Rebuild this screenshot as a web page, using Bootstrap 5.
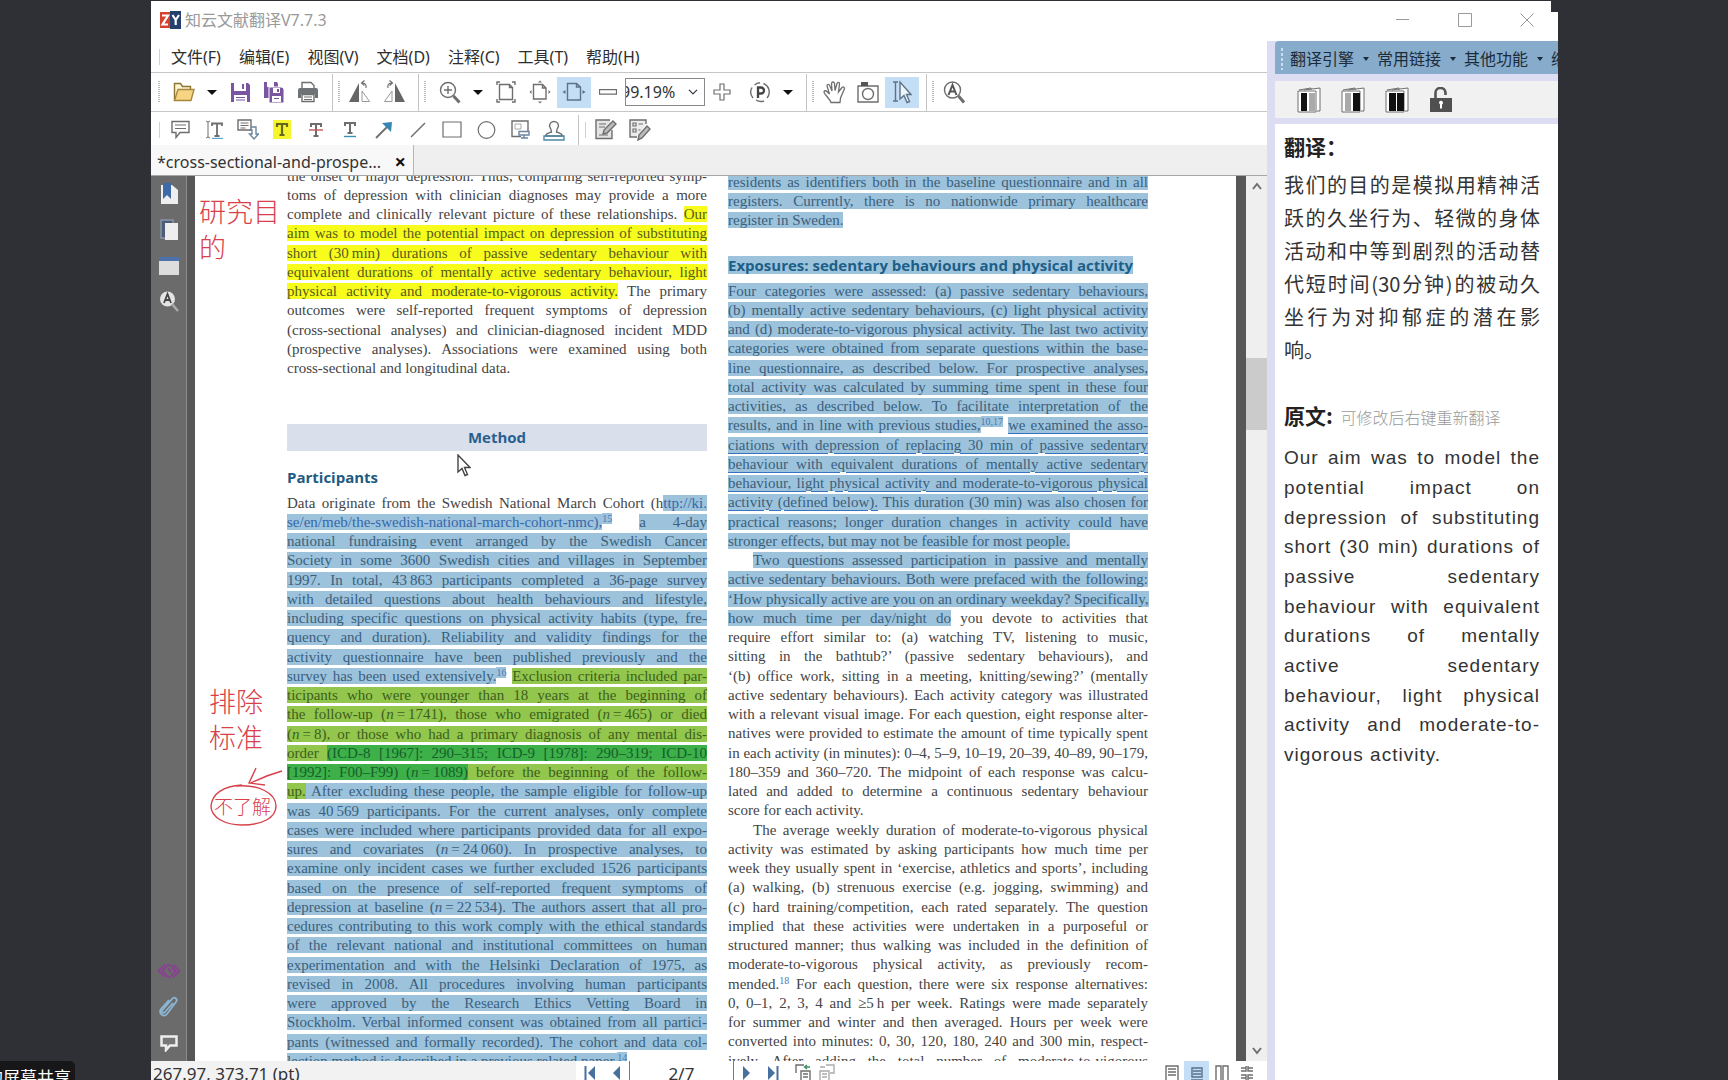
<!DOCTYPE html>
<html lang="zh-CN">
<head>
<meta charset="utf-8">
<meta name="viewport" content="width=device-width, initial-scale=1">
<title>知云文献翻译</title>
<link href="https://cdn.jsdelivr.net/npm/bootstrap@5.3.0/dist/css/bootstrap.min.css" rel="stylesheet">
<style>
body{background:#2f3035;font-family:"Noto Sans","Noto Sans CJK SC",sans-serif;font-size:16px;color:#333;line-height:20px}
.app-win{margin:1px 170px 0 151px;background:#fff}
.title-bar{height:40px;padding:0 0 2px 9px;color:#9a9a9a}
.notch{top:-1px;right:0;width:7px;height:12px;background:#2f3035}
.menu-row{height:32px;border-bottom:1px solid #c6c6c6;padding:1px 0 0 4px;color:#2e2e2e}
.menu-row a{margin-right:18px;color:inherit}
.menu-row .grip{margin-right:8px}
.tool-row{height:39px;border-bottom:1px solid #c6c6c6;padding:1px 0 0 4px}
.tool-row.second{height:33px;border-bottom:0;padding-top:3px}
.grip{width:8px;height:22px;background:repeating-linear-gradient(#b8b8b8 0 1px,#fff 1px 2px) center/2px 100% no-repeat}
.grip.solid{height:16px;background:linear-gradient(#cfcfdc,#cfcfdc) center/1px 100% no-repeat}
.vsep{width:1px;margin:0 2px 0 7px;background:#c4c4c4}
.tb{width:34px;height:31px;padding:0;border:0;background:transparent;display:flex;align-items:center;justify-content:center}
.tb.win-ctl{width:62px;height:38px}
.tb.on{background:#c3def5}
.caret{width:22px;height:31px;padding:0;border:0;background:transparent}
.caret::after{content:"";display:block;margin:auto;width:9px;border:5px solid transparent;border-top-color:#111;border-bottom:0}
svg{display:block;fill:none;stroke:#6e6e6e;stroke-width:1.4}
.zoom-sel{width:80px;height:28px;border:1px solid #8a8a8a;border-radius:0;padding:0 20px 0 0;font:16px "Noto Sans",sans-serif;color:#333;background-position:right 5px center;background-size:12px 10px;text-indent:-5px}
.tab-row{height:31px;background:#efefef;border-bottom:1px solid #a6a6a6}
.doc-tab{width:263px;padding:4px 7px 0 6px;background:#f8f8f8;border-right:1px solid #b5b5b5;white-space:nowrap}
.doc-tab button{border:0;background:none;padding:0;font:bold 20px/20px "Noto Sans",sans-serif;color:#111}
.side{width:36px;background:#6b6b6b;border-right:1px solid #8c8c8c}
.side button{width:36px;height:36px;padding:0;border:0;background:none;display:flex;align-items:center;justify-content:center}
.side-edge{width:8px;background:#565656}
.page{background:#fff;padding:0 88px 0 92px;gap:21px;font:15px/19px "Liberation Serif",serif;color:#444}
.col-text{flex:1 1 0;min-width:0}
.col-a{margin-top:-9px}
.col-b{margin-top:-3px}
.ln{height:19px;text-align:justify;text-align-last:justify;white-space:nowrap}
.ln:nth-child(4n){height:20px}
.ln.fin{text-align-last:left}
.ln.ind{padding-left:25px}
.ln sup{font-size:10px;color:#4b78b5}
.sb{background:#9dc3dc;color:#3a5f7c}
.sb.lk{color:#3567ab}
.sb.un{text-decoration:underline;text-decoration-color:#3573c0;text-underline-offset:3px}
.sy{background:#f8fc1c;color:#565c1a}
.sg{background:#92c64c;color:#3d5f1d}
.sd{background:#3db04a;color:#155f2a}
.band{height:27px;margin:46px 0 16px;background:#d9dfeb;text-align:center;font:bold 15px/27px "Open Sans",sans-serif;color:#2a5f90}
.subhead{font:bold 15px/20px "Open Sans",sans-serif;color:#1f5a82;margin:0 0 7px}
.subhead.sel{line-height:18px;margin:26px 0 8px;white-space:nowrap}
.subhead.sel span{background:#9dc3dc;color:#1b5f88;display:inline-block}
.page-end{width:10px;background:#575757}
.scroll{width:21px;background:#efefef}
.scroll .thumb{height:72px;background:#cbcbcb}
.ink{position:absolute;color:#d8404a;font:300 27px/36px "Noto Sans CJK SC",sans-serif;white-space:nowrap}
.ink.sm{font-size:19px;line-height:24px}
svg.ink{stroke:#d8404a}
.pointer{position:absolute;left:262px;top:278px}
.status{height:19px;background:#fff;overflow:hidden}
.status .coords{width:425px;background:#f2f2f2;padding-left:2px;font-size:17px;line-height:26px}
.status button{border:0;background:none;padding:0;height:24px}
.pg-box{width:105px;border:solid #5b7ba8;border-width:0 1px;font-size:17px;line-height:26px;text-align:center;height:19px}
.view-btn{width:25px;display:flex;justify-content:center;align-items:center}
.view-btn.on{background:#c3def5!important}
.trans{width:291px;background:#dcdcf3;padding-left:8px;margin-top:40px}
.t-menu{height:33px;background:#86abcb;border-radius:4px 0 0 0;color:#1c2b3a;padding:3px 0 0 3px}
.t-menu .grip{background:repeating-linear-gradient(#c8def0 0 3px,transparent 3px 5px) center/2px 100% no-repeat;margin-right:4px}
.t-menu a{color:inherit;width:87px;flex:none;display:flex;align-items:center}
.t-menu a::after{content:"";margin-left:9px;border:3px solid transparent;border-top:4px solid #1c2b3a;border-bottom:0}
.t-tools{height:37px;margin:7px 0 6px;background:#f1f1f1;padding-left:12px}
.t-tools button{width:44px;height:30px;border:0;background:none;padding:0;display:flex;align-items:center;justify-content:center}
.t-body{background:#fff;padding:9px 18px 0 9px;color:#333}
.t-head{font-size:21px;line-height:26px;font-weight:700;color:#222;margin:0;font-family:"Noto Sans CJK SC",sans-serif}
.t-head small{font-size:16px;font-weight:300;color:#999;margin-left:3px}
.zh{font:20px/33px "Noto Sans CJK SC",sans-serif;margin:9px 0 36px;color:#333}
.en{font:19px/30px "Liberation Sans",sans-serif;letter-spacing:1px;margin-top:13px}
.jl{text-align:justify;text-align-last:justify;white-space:nowrap}
.jl.fin{text-align-last:left}
.en .jl:nth-child(3n){line-height:29px}
.share{left:0;bottom:0;height:19px;width:75px;background:#17171a;border-radius:0 5px 0 0;color:#fff;font:17px/31px "Noto Sans CJK SC",sans-serif;display:flex;justify-content:flex-end;padding-right:4px;white-space:nowrap}
</style>
<script src="https://cdn.jsdelivr.net/npm/bootstrap@5.3.0/dist/js/bootstrap.bundle.min.js"></script>
</head>
<body class="vh-100 overflow-hidden d-flex flex-column">
<div class="app-win flex-grow-1 position-relative d-flex overflow-hidden">
  <div class="d-flex flex-column flex-grow-1 overflow-hidden">
    <header class="title-bar d-flex align-items-center">
      <svg class="me-1" width="21" height="18" viewBox="0 0 21 18"><path d="M0 1h10v16H0z" fill="#d5432f" stroke="none"/><path d="M10 0h11v18H10z" fill="#23406f" stroke="none"/><path d="M2 4.500h6L2.500 13.500H8M12.500 4l3.200 5v5M19 4l-3.300 5" stroke="#fff" stroke-width="2.200"/></svg>
      <span>知云文献翻译V7.7.3</span>
    </header>
    <nav class="menu-row d-flex flex-shrink-0 align-items-center" aria-label="菜单">
      <span class="grip solid"></span>
      <a href="#" class="text-decoration-none">文件(F)</a><a href="#" class="text-decoration-none">编辑(E)</a><a href="#" class="text-decoration-none">视图(V)</a><a href="#" class="text-decoration-none">文档(D)</a><a href="#" class="text-decoration-none">注释(C)</a><a href="#" class="text-decoration-none">工具(T)</a><a href="#" class="text-decoration-none">帮助(H)</a>
    </nav>
    <div class="tool-row d-flex flex-shrink-0 align-items-center">
      <span class="grip me-1"></span>
      <button class="tb" aria-label="打开"><svg width="22" height="22" viewBox="0 0 22 22"><path d="M1.500 19.500V2.500h6l2 3h8v3" fill="#fff3d0" style="stroke:#8b7433"/><path d="M1.500 19.500 5 8.500h16l-3 11z" fill="#f7d482" style="stroke:#a5883c"/></svg></button>
      <button class="caret" aria-label="最近"></button>
      <button class="tb" aria-label="保存"><svg width="21" height="21" viewBox="0 0 21 21"><path d="M1 1h17l2 2v17H1z" fill="#7b55a0" stroke="none"/><path d="M4 1h12v8H4zM4 13h13v7H4z" fill="#fff" stroke="none"/><path d="M12 2h2v5h-2zM6 15h9v1H6zM6 17.500h9v1H6z" fill="#7b55a0" stroke="none"/></svg></button>
      <button class="tb" aria-label="全部保存"><svg width="22" height="23" viewBox="0 0 22 23"><path d="M1 1h13l1 2v14H1z" fill="#7b55a0" stroke="none"/><path d="M4 1h7v5H4z" fill="#fff" stroke="none"/><path d="M6 6h13l2 2v14H6z" fill="#7b55a0" stroke="#fff" stroke-width="1"/><path d="M10 7h7v5h-7zM9 15h9v6H9z" fill="#fff" stroke="none"/><path d="M14 8h2v3h-2zM11 17h5v1h-5z" fill="#7b55a0" stroke="none"/></svg></button>
      <button class="tb" aria-label="打印"><svg width="22" height="22" viewBox="0 0 22 22"><path d="M5 7V1.500h9l3 3V7" fill="#fff"/><path d="M1 9q0-2 2-2h16q2 0 2 2v8h-3v-4H4v4H1z" fill="#6f7377" stroke="none"/><path d="M5 13.500h12v7H5z" fill="#fff"/><path d="M7 16h8M7 18.500h8" stroke-width="1"/></svg></button>
      <span class="vsep align-self-stretch"></span><span class="grip"></span>
      <button class="tb" aria-label="左旋"><svg width="22" height="24" viewBox="0 0 22 24"><path d="M10 3v19H0z" fill="#666" stroke="none"/><path d="M13 11v10.500h7.500z" stroke="#999" stroke-width="1"/><path d="M17 8q1-5-4-5M15.500.500 12.500 3l3 2.500" stroke-width="1.200"/></svg></button>
      <button class="tb" aria-label="右旋"><svg width="22" height="24" viewBox="0 0 22 24"><path d="M12 3v19h10z" fill="#666" stroke="none"/><path d="M9 11v10.500H1.500z" stroke="#999" stroke-width="1"/><path d="M5 8Q4 3 9 3M6.500.500l3 2.500-3 2.500" stroke-width="1.200"/></svg></button>
      <span class="vsep align-self-stretch"></span><span class="grip me-1"></span>
      <button class="tb" aria-label="放大镜"><svg width="22" height="23" viewBox="0 0 22 23"><circle cx="9" cy="9" r="7.500"/><path d="M9 5v8M5 9h8"/><path d="m14.500 15 6 6.500" stroke-width="3"/></svg></button>
      <button class="caret" aria-label="缩放菜单"></button>
      <button class="tb" aria-label="适合页面"><svg width="20" height="22" viewBox="0 0 20 22"><path d="M3.500 3.500h10l3 3v12h-13zM13.500 3.500v3h3"/><path d="M1 4V1h3M16 1h3v3M19 18v3h-3M4 21H1v-3"/></svg></button>
      <button class="tb" aria-label="实际大小"><svg width="22" height="24" viewBox="0 0 22 24"><path d="M4.500 4.500h9l3.500 3.500v11H4.500zM13.500 4.500V8H17"/><path d="m9 2.500 2-2 2 2zM9 21.500l2 2 2-2zM2.500 10l-2 2 2 2zM19.500 10l2 2-2 2z" fill="#6e6e6e" stroke="none"/></svg></button>
      <button class="tb on" aria-label="适合宽度"><svg width="24" height="20" viewBox="0 0 24 20"><path d="M5.500 1.500h9L18.500 5v13h-13zM14.500 1.500V5h4" style="stroke:#5f7387"/><path d="m3.500 8-3 2 3 2zM20.500 8l3 2-3 2z" fill="#5f7387" stroke="none"/></svg></button>
      <button class="tb" aria-label="缩小"><svg width="18" height="6" viewBox="0 0 18 6"><path d="M.500.700h17v4.500H.500z" stroke-width="1.200"/></svg></button>
      <select class="form-select zoom-sel" aria-label="缩放比例"><option>99.19%</option></select>
      <button class="tb" aria-label="放大"><svg width="18" height="18" viewBox="0 0 18 18"><path d="M7 1h4v6h6v4h-6v6H7v-6H1V7h6z" stroke-width="1.200"/></svg></button>
      <button class="tb ms-1" aria-label="旋转视图"><svg width="22" height="22" viewBox="0 0 22 22"><path d="M14.500 2.500A9.200 9.200 0 0 1 18 17M15 20a9 9 0 0 1-8-1M4 17A9.200 9.200 0 0 1 3 6.500M5.500 4A9 9 0 0 1 11 1.700"/><path d="M9 17V6.500h3a2.700 2.700 0 0 1 0 6H9" stroke-width="2.300" style="stroke:#444"/></svg></button>
      <button class="caret" aria-label="旋转菜单"></button>
      <span class="vsep align-self-stretch"></span><span class="grip"></span>
      <button class="tb" aria-label="手形"><svg width="23" height="24" viewBox="0 0 23 24"><path d="M8 22.500C7 19 1 14 1 12c0-1.500 2-1.800 3.500 0L6.500 14 4 6c0-2 2-2.300 2.700-.500L9 11 8.500 3.500c.300-2 2.500-2 3 0L12 10.500l2-7c.700-1.800 2.700-1.400 2.500.500L15.500 12 19 7.500c1.500-1.300 3 0 2.300 1.700L17.500 18l-.5 4.500z" fill="#fff" stroke-width="1.300"/></svg></button>
      <button class="tb" aria-label="快照"><svg width="22" height="21" viewBox="0 0 22 21"><path d="M1 4h20v16H1z"/><path d="M4 0h7v4H4z" fill="#555" stroke="none"/><circle cx="11" cy="12" r="5.500"/></svg></button>
      <button class="tb on" aria-label="选择文本"><svg width="20" height="24" viewBox="0 0 20 24" style="stroke:#5f7387"><path d="M1 2h5M3.500 2v19M1 21h5"/><path d="M8 2v17l4-3.500 3 7 2.500-1-3-7H19z" fill="#eef6fd"/></svg></button>
      <span class="vsep align-self-stretch"></span><span class="grip"></span>
      <button class="tb" aria-label="查找"><svg width="22" height="23" viewBox="0 0 22 23"><circle cx="9.500" cy="9" r="8"/><path d="m15.500 15 5.500 6.500" stroke-width="3"/><path d="m5.500 14 4-10 4 10M7 10.500h5" stroke-width="2" style="stroke:#555"/></svg></button>
    </div>
    <div class="tool-row second d-flex flex-shrink-0 align-items-center">
      <span class="grip solid"></span>
      <button class="tb" aria-label="附注"><svg width="19" height="19" viewBox="0 0 19 19"><path d="M1 1.500h17v11H9l-4 5v-5H1z"/><path d="M4 5h11M4 8.500h11" stroke-width="1.200"/></svg></button>
      <button class="tb" aria-label="插入文本"><svg width="19" height="19" viewBox="0 0 19 19"><path d="M1 1l2 1 2-1M3 2v15M1 18l2-1 2 1" stroke-width="1"/><path d="M7 6V3.500h10V6M12 3.500V16M9.500 16h5" stroke-width="1.800"/><path d="M7 18.500h11" style="stroke:#59a6c9"/></svg></button>
      <button class="tb" aria-label="替换文本"><svg width="22" height="22" viewBox="0 0 22 22"><path d="M1 1h13v10H1z"/><path d="M3.500 4h8M3.500 6.500h8M3.500 9h5" stroke-width="1"/><path d="M14 8h5v7h2.500L17 20l-4.500-5H15v-4h-3" style="stroke:#6c86a0"/></svg></button>
      <button class="tb" aria-label="高亮"><svg width="18" height="19" viewBox="0 0 18 19"><path d="M0 0h18v19H0z" fill="#f4f52c" stroke="none"/><path d="M4 7V4h10v3M9 4v11M6.500 15h5" stroke-width="2.200" style="stroke:#66661f"/></svg></button>
      <button class="tb" aria-label="删除线"><svg width="16" height="16" viewBox="0 0 16 16"><path d="M3 5V2h10v3M8 2v12M5.500 14h5" stroke-width="2"/><path d="M1 8h14" style="stroke:#c05a5a"/></svg></button>
      <button class="tb" aria-label="下划线"><svg width="14" height="17" viewBox="0 0 14 17"><path d="M2 5V2h10v3M7 2v10M4.500 12h5" stroke-width="2"/><path d="M1 15.500h12" style="stroke:#3d8fb8"/></svg></button>
      <button class="tb" aria-label="箭头"><svg width="18" height="18" viewBox="0 0 18 18"><path d="M1 17 12 6" stroke-width="1.800"/><path d="M7 2l10-1-1 10z" fill="#3586b5" stroke="none"/></svg></button>
      <button class="tb" aria-label="直线"><svg width="16" height="16" viewBox="0 0 16 16"><path d="M1 15 15 1" stroke-width="1.500"/></svg></button>
      <button class="tb" aria-label="矩形"><svg width="20" height="17" viewBox="0 0 20 17"><path d="M1 1h18v15H1z" stroke-width="1.200"/></svg></button>
      <button class="tb" aria-label="椭圆"><svg width="19" height="18" viewBox="0 0 19 18"><circle cx="9.500" cy="9" r="8.300" stroke-width="1.200"/></svg></button>
      <button class="tb" aria-label="文本框"><svg width="19" height="19" viewBox="0 0 19 19"><path d="M10 16.500H1V1h16v10"/><path d="M4 4h6v5H4z" stroke-width="1" style="stroke:#aaa"/><path d="M8 11.500h10V15H8zM13 15v3M10 18h7" style="stroke:#6c86a0"/></svg></button>
      <button class="tb" aria-label="图章"><svg width="22" height="22" viewBox="0 0 22 22"><path d="M8.500 13c0-2-1-4-2-6a4.500 4.500 0 1 1 9 0c-1 2-2 4-2 6 2 1 5.500 1 6 4H2.500c.5-3 4-3 6-4z"/><path d="M1 17h20v4H1z" style="stroke:#4d89a8"/></svg></button>
      <span class="vsep align-self-stretch"></span><span class="grip solid"></span>
      <button class="tb" aria-label="编辑内容"><svg width="22" height="21" viewBox="0 0 22 21"><path d="M17 11v8.500H1V1h14" fill="#e4e4e4"/><path d="M4 5h7M4 8h6M4 16h9" stroke-width="1.200"/><path d="m8 15 1-4 9-9 3 3-9 9z" fill="#bbb"/></svg></button>
      <button class="tb" aria-label="编辑表单"><svg width="22" height="22" viewBox="0 0 22 22"><path d="M8 18H1V1h16v4" fill="#ececec"/><path d="M4 4h3v3H4zM4 10h3v3H4zM9.500 5H14M9.500 11h2" stroke-width="1.200"/><path d="m9 21 1-5 8-9 3 3-8 9z" fill="#bbb"/></svg></button>
    </div>
    <div class="tab-row d-flex flex-shrink-0">
      <div class="doc-tab d-flex align-items-center justify-content-between"><span>*cross-sectional-and-prospe...</span><button aria-label="关闭标签">×</button></div>
    </div>
    <main class="d-flex flex-grow-1 overflow-hidden">
      <aside class="side d-flex flex-column">
        <button aria-label="书签"><svg width="18" height="22" viewBox="0 0 18 22"><path d="M1 2h11l6 5v14H1z" fill="#eee" stroke="none"/><path d="M3 0h8v16l-4-4-4 4z" fill="#3d6ba8" stroke="none"/></svg></button>
        <button aria-label="缩略图"><svg width="19" height="22" viewBox="0 0 19 22"><path d="M1 1h12v18H1z" fill="#4d5d78" stroke="#8a97ab"/><path d="M5 4h13v17H5z" fill="#eee" stroke="none"/></svg></button>
        <button aria-label="图层"><svg width="20" height="18" viewBox="0 0 20 18"><path d="M0 0h20v18H0z" fill="#ddd" stroke="none"/><path d="M0 0h20v4H0z" fill="#4d72ab" stroke="none"/></svg></button>
        <button aria-label="搜索"><svg width="20" height="21" viewBox="0 0 20 21"><circle cx="8.500" cy="8" r="7.500" fill="#e4e4e4" stroke="none"/><path d="m13 13 6 7" style="stroke:#aaa" stroke-width="2.500"/><path d="m5 12 3.500-9L12 12M6 9h5" style="stroke:#444" stroke-width="1.800"/></svg></button>
        <span class="flex-grow-1"></span>
        <button aria-label="链接"><svg width="24" height="18" viewBox="0 0 24 18"><path d="M8.500 12 5.500 9l5-5.500c1-1 2-1 3 0L19 9l-3 3M15.500 6l3 3-5 5.500c-1 1-2 1-3 0L5 9l3-3M8 15 1.500 9 8 2.500M16 2.500 22.500 9 16 15.500M11 6.500l3 3.500" style="stroke:#8d3d96" stroke-width="1.600"/></svg></button>
        <button aria-label="附件"><svg width="20" height="22" viewBox="0 0 20 22"><path d="m14 7-8 9c-2 2-4 0-2.500-2L13 3c2.500-3 6 0 4 3L8 18c-3 3.500-9 0-6-5l8-9" style="stroke:#8db4d0" stroke-width="1.800"/></svg></button>
        <button aria-label="注释"><svg width="18" height="17" viewBox="0 0 18 17"><path d="M1.500 1.500h15v9H10L6 15v-4.500H1.500z" fill="#777" style="stroke:#eee" stroke-width="2.500"/></svg></button>
      </aside>
      <div class="side-edge"></div>
      <article class="page position-relative d-flex flex-grow-1 overflow-hidden" lang="en">
        <div class="col-text col-a">
          <div>
            <div class="ln">the onset of major depression. Thus, comparing self-reported symp-</div>
            <div class="ln">toms of depression with clinician diagnoses may provide a more</div>
            <div class="ln">complete and clinically relevant picture of these relationships. <span class="sy">Our</span></div>
            <div class="ln"><span class="sy">aim was to model the potential impact on depression of substituting</span></div>
            <div class="ln"><span class="sy">short (30&#8201;min) durations of passive sedentary behaviour with</span></div>
            <div class="ln"><span class="sy">equivalent durations of mentally active sedentary behaviour, light</span></div>
            <div class="ln"><span class="sy">physical activity and moderate-to-vigorous activity.</span> The primary</div>
            <div class="ln">outcomes were self-reported frequent symptoms of depression</div>
            <div class="ln">(cross-sectional analyses) and clinician-diagnosed incident MDD</div>
            <div class="ln">(prospective analyses). Associations were examined using both</div>
            <div class="ln fin">cross-sectional and longitudinal data.</div>
          </div>
          <h2 class="band">Method</h2>
          <h3 class="subhead">Participants</h3>
          <div>
            <div class="ln">Data originate from the Swedish National March Cohort (h<span class="sb lk">ttp://ki.</span></div>
            <div class="ln"><span class="sb lk">se/en/meb/the-swedish-national-march-cohort-nmc),</span><sup class="sb">15</sup> <span class="sb">a 4-day</span></div>
            <div class="ln"><span class="sb">national fundraising event arranged by the Swedish Cancer</span></div>
            <div class="ln"><span class="sb">Society in some 3600 Swedish cities and villages in September</span></div>
            <div class="ln"><span class="sb">1997. In total, 43&#8201;863 participants completed a 36-page survey</span></div>
            <div class="ln"><span class="sb">with detailed questions about health behaviours and lifestyle,</span></div>
            <div class="ln"><span class="sb">including specific questions on physical activity habits (type, fre-</span></div>
            <div class="ln"><span class="sb">quency and duration). Reliability and validity findings for the</span></div>
            <div class="ln"><span class="sb">activity questionnaire have been published previously and the</span></div>
            <div class="ln"><span class="sb">survey has been used extensively.</span><sup class="sb">16</sup> <span class="sg">Exclusion criteria included par-</span></div>
            <div class="ln"><span class="sg">ticipants who were younger than 18 years at the beginning of</span></div>
            <div class="ln"><span class="sg">the follow-up (<i>n</i>&#8201;=&#8201;1741), those who emigrated (<i>n</i>&#8201;=&#8201;465) or died</span></div>
            <div class="ln"><span class="sg">(<i>n</i>&#8201;=&#8201;8), or those who had a primary diagnosis of any mental dis-</span></div>
            <div class="ln"><span class="sg">order </span><span class="sd">(ICD-8 [1967]: 290–315; ICD-9 [1978]: 290–319; ICD-10</span></div>
            <div class="ln"><span class="sd">[1992]: F00–F99) (<i>n</i>&#8201;=&#8201;1089)</span><span class="sg"> before the beginning of the follow-</span></div>
            <div class="ln"><span class="sg">up.</span><span class="sb"> After excluding these people, the sample eligible for follow-up</span></div>
            <div class="ln"><span class="sb">was 40&#8201;569 participants. For the current analyses, only complete</span></div>
            <div class="ln"><span class="sb">cases were included where participants provided data for all expo-</span></div>
            <div class="ln"><span class="sb">sures and covariates (<i>n</i>&#8201;=&#8201;24&#8201;060). In prospective analyses, to</span></div>
            <div class="ln"><span class="sb">examine only incident cases we further excluded 1526 participants</span></div>
            <div class="ln"><span class="sb">based on the presence of self-reported frequent symptoms of</span></div>
            <div class="ln"><span class="sb">depression at baseline (<i>n</i>&#8201;=&#8201;22&#8201;534). The authors assert that all pro-</span></div>
            <div class="ln"><span class="sb">cedures contributing to this work comply with the ethical standards</span></div>
            <div class="ln"><span class="sb">of the relevant national and institutional committees on human</span></div>
            <div class="ln"><span class="sb">experimentation and with the Helsinki Declaration of 1975, as</span></div>
            <div class="ln"><span class="sb">revised in 2008. All procedures involving human participants</span></div>
            <div class="ln"><span class="sb">were approved by the Research Ethics Vetting Board in</span></div>
            <div class="ln"><span class="sb">Stockholm. Verbal informed consent was obtained from all partici-</span></div>
            <div class="ln"><span class="sb">pants (witnessed and formally recorded). The cohort and data col-</span></div>
            <div class="ln fin"><span class="sb">lection method is described in a previous related paper.</span><sup class="sb">14</sup></div>
          </div>
        </div>
        <div class="col-text col-b">
          <div>
            <div class="ln"><span class="sb">residents as identifiers both in the baseline questionnaire and in all</span></div>
            <div class="ln"><span class="sb">registers. Currently, there is no nationwide primary healthcare</span></div>
            <div class="ln fin"><span class="sb">register in Sweden.</span></div>
          </div>
          <h3 class="subhead sel"><span>Exposures: sedentary behaviours and physical activity</span></h3>
          <div>
            <div class="ln"><span class="sb">Four categories were assessed: (a) passive sedentary behaviours,</span></div>
            <div class="ln"><span class="sb">(b) mentally active sedentary behaviours, (c) light physical activity</span></div>
            <div class="ln"><span class="sb">and (d) moderate-to-vigorous physical activity. The last two activity</span></div>
            <div class="ln"><span class="sb">categories were obtained from separate questions within the base-</span></div>
            <div class="ln"><span class="sb">line questionnaire, as described below. For prospective analyses,</span></div>
            <div class="ln"><span class="sb">total activity was calculated by summing time spent in these four</span></div>
            <div class="ln"><span class="sb">activities, as described below. To facilitate interpretation of the</span></div>
            <div class="ln"><span class="sb">results, and in line with previous studies,</span><sup class="sb">10,17</sup> <span class="sb un">we examined the asso-</span></div>
            <div class="ln"><span class="sb un">ciations with depression of replacing 30 min of passive sedentary</span></div>
            <div class="ln"><span class="sb un">behaviour with equivalent durations of mentally active sedentary</span></div>
            <div class="ln"><span class="sb un">behaviour, light physical activity and moderate-to-vigorous physical</span></div>
            <div class="ln"><span class="sb un">activity (defined below).</span><span class="sb"> This duration (30 min) was also chosen for</span></div>
            <div class="ln"><span class="sb">practical reasons; longer duration changes in activity could have</span></div>
            <div class="ln fin"><span class="sb">stronger effects, but may not be feasible for most people.</span></div>
            <div class="ln ind"><span class="sb">Two questions assessed participation in passive and mentally</span></div>
            <div class="ln"><span class="sb">active sedentary behaviours. Both were prefaced with the following:</span></div>
            <div class="ln"><span class="sb">‘How physically active are you on an ordinary weekday? Specifically,</span></div>
            <div class="ln"><span class="sb">how much time per day/night do</span> you devote to activities that</div>
            <div class="ln">require effort similar to: (a) watching TV, listening to music,</div>
            <div class="ln">sitting in the bathtub?’ (passive sedentary behaviours), and</div>
            <div class="ln">‘(b) office work, sitting in a meeting, knitting/sewing?’ (mentally</div>
            <div class="ln">active sedentary behaviours). Each activity category was illustrated</div>
            <div class="ln">with a relevant visual image. For each question, eight response alter-</div>
            <div class="ln">natives were provided to estimate the amount of time typically spent</div>
            <div class="ln">in each activity (in minutes): 0–4, 5–9, 10–19, 20–39, 40–89, 90–179,</div>
            <div class="ln">180–359 and 360–720. The midpoint of each response was calcu-</div>
            <div class="ln">lated and added to determine a continuous sedentary behaviour</div>
            <div class="ln fin">score for each activity.</div>
            <div class="ln ind">The average weekly duration of moderate-to-vigorous physical</div>
            <div class="ln">activity was estimated by asking participants how much time per</div>
            <div class="ln">week they usually spent in ‘exercise, athletics and sports’, including</div>
            <div class="ln">(a) walking, (b) strenuous exercise (e.g. jogging, swimming) and</div>
            <div class="ln">(c) hard training/competition, each rated separately. The question</div>
            <div class="ln">implied that these activities were undertaken in a purposeful or</div>
            <div class="ln">structured manner; thus walking was included in the definition of</div>
            <div class="ln">moderate-to-vigorous physical activity, as previously recom-</div>
            <div class="ln">mended.<sup>18</sup> For each question, there were six response alternatives:</div>
            <div class="ln">0, 0–1, 2, 3, 4 and ≥5&#8201;h per week. Ratings were made separately</div>
            <div class="ln">for summer and winter and then averaged. Hours per week were</div>
            <div class="ln">converted into minutes: 0, 30, 120, 180, 240 and 300 min, respect-</div>
            <div class="ln">ively. After adding the total number of moderate-to-vigorous</div>
          </div>
        </div>
        <div class="ink" lang="zh-CN" style="left:4px;top:17px">研究目<br>的</div>
        <div class="ink" lang="zh-CN" style="left:14px;top:507px">排除<br>标准</div>
        <div class="ink sm" lang="zh-CN" style="left:19px;top:618px">不了解</div>
        <svg class="ink" style="left:14px;top:590px" width="76" height="62" viewBox="0 0 76 62"><path d="M73 5C62 8 52 12 42 17M47 2 40 17l16 2M33 19C14 20 3 28 2 40c0 12 15 19 31 19 20 0 34-7 34-19 0-12-16-22-40-20"/></svg>
        <svg class="pointer" width="14" height="23" viewBox="0 0 14 23"><path d="M1 1v17l4-3.500 3 7 2.500-1-3-7H13z" fill="#fff" style="stroke:#444"/></svg>
      </article>
      <div class="page-end"></div>
      <div class="scroll d-flex flex-column align-items-center">
        <svg class="mt-1" width="10" height="14" viewBox="0 0 10 14"><path d="m1 9 4-5 4 5" stroke-width="2"/></svg>
        <div class="w-100" style="flex:164 0 0"></div>
        <div class="thumb w-100"></div>
        <div class="w-100" style="flex:613 0 0"></div>
        <svg class="mb-1" width="10" height="14" viewBox="0 0 10 14"><path d="m1 5 4 5 4-5" stroke-width="2"/></svg>
      </div>
    </main>
    <footer class="status d-flex flex-shrink-0">
      <span class="coords">267.97, 373.71 (pt)</span>
      <span class="d-flex align-items-start">
        <button class="ms-2 me-3" aria-label="第一页"><svg width="12" height="14" viewBox="0 0 12 14"><path d="M1.500 0v14" style="stroke:#47709f" stroke-width="2"/><path d="M11 0v14L4 7z" fill="#47709f" stroke="none"/></svg></button>
        <button class="me-2" aria-label="上一页"><svg width="9" height="14" viewBox="0 0 9 14"><path d="M8 0v14L1 7z" fill="#47709f" stroke="none"/></svg></button>
        <span class="pg-box">2/7</span>
        <button class="ms-2 me-3" aria-label="下一页"><svg width="9" height="14" viewBox="0 0 9 14"><path d="M1 0v14l7-7z" fill="#47709f" stroke="none"/></svg></button>
        <button class="me-3" aria-label="最后一页"><svg width="12" height="14" viewBox="0 0 12 14"><path d="M10.500 0v14" style="stroke:#47709f" stroke-width="2"/><path d="M1 0v14l7-7z" fill="#47709f" stroke="none"/></svg></button>
        <button class="me-2" aria-label="后退"><svg width="16" height="18" viewBox="0 0 16 18"><path d="M1 9V1h8M6 7h9v10H6zM8 10h5M8 13h5"/><path d="M15 3h-5M12 1l-2.500 2L12 5" style="stroke:#3d8f68"/></svg></button>
        <button aria-label="前进"><svg width="16" height="18" viewBox="0 0 16 18" style="stroke:#aaa"><path d="M7 1h8v8h-4M1 7h9v10H1zM3 10h5M3 13h5M1 3h5"/></svg></button>
      </span>
      <span class="d-flex ms-auto me-2">
        <button class="view-btn" aria-label="单页"><svg width="14" height="17" viewBox="0 0 14 17"><path d="M1 1h12v15H1zM3 4h8M3 7h8M3 10h8"/></svg></button>
        <button class="view-btn on" aria-label="连续"><svg width="14" height="17" viewBox="0 0 14 17"><path d="M2 3h10v9H2zM3 6h8M3 9h8M1 15h12" style="stroke:#58718c"/></svg></button>
        <button class="view-btn" aria-label="双页"><svg width="14" height="17" viewBox="0 0 14 17"><path d="M1 1h5v15H1zM8 1h5v15H8z"/></svg></button>
        <button class="view-btn" aria-label="双页连续"><svg width="14" height="17" viewBox="0 0 14 17"><path d="M1 3h5M8 3h5M1 6h5V1M8 1v5h5M1 10h5v6M13 10H8v6M1 13h5M8 13h5"/></svg></button>
      </span>
    </footer>
  </div>
  <section class="trans d-flex flex-column flex-shrink-0">
    <nav class="t-menu d-flex align-items-center overflow-hidden" aria-label="翻译菜单">
      <span class="grip flex-shrink-0"></span>
      <a href="#" class="text-decoration-none">翻译引擎</a><a href="#" class="text-decoration-none">常用链接</a><a href="#" class="text-decoration-none">其他功能</a><a href="#" class="text-decoration-none">缩放</a>
    </nav>
    <div class="t-tools d-flex align-items-center">
      <button aria-label="左栏"><svg width="26" height="26" viewBox="0 0 26 26"><path d="M2 4h18v21H2zM8 3l16-2v23h-3M3 3l12-2v2" fill="#fff" stroke-width="1"/><path d="M5 6h6v18H5z" fill="#111" stroke="none"/><path d="M13 6h6v18h-6z" fill="#aaa" stroke="none"/></svg></button>
      <button aria-label="右栏"><svg width="26" height="26" viewBox="0 0 26 26"><path d="M2 4h18v21H2zM8 3l16-2v23h-3M3 3l12-2v2" fill="#fff" stroke-width="1"/><path d="M5 6h6v18H5z" fill="#aaa" stroke="none"/><path d="M13 6h7v18h-7z" fill="#111" stroke="none"/></svg></button>
      <button aria-label="双栏"><svg width="26" height="26" viewBox="0 0 26 26"><path d="M2 4h18v21H2zM8 3l16-2v23h-3M3 3l12-2v2" fill="#fff" stroke-width="1"/><path d="M5 6h7v18H5zM13 6h7v18h-7z" fill="#111" stroke="none"/></svg></button>
      <button aria-label="锁定"><svg width="24" height="26" viewBox="0 0 24 26"><path d="M6.500 12V6.500a5 5 0 0 1 10-1V8" style="stroke:#555" stroke-width="2.600"/><path d="M1 11h22v14H1z" fill="#505050" stroke="none"/><path d="M10 16a2 2 0 1 1 3 1.500v4h-2v-4z" fill="#fff" stroke="none"/></svg></button>
    </div>
    <div class="t-body flex-grow-1 overflow-hidden">
      <h2 class="t-head">翻译：</h2>
      <div class="zh">
        <div class="jl">我们的目的是模拟用精神活</div>
        <div class="jl">跃的久坐行为、轻微的身体</div>
        <div class="jl">活动和中等到剧烈的活动替</div>
        <div class="jl">代短时间(30分钟)的被动久</div>
        <div class="jl">坐行为对抑郁症的潜在影</div>
        <div class="jl fin">响。</div>
      </div>
      <h2 class="t-head">原文: <small>可修改后右键重新翻译</small></h2>
      <div class="en" lang="en">
        <div class="jl">Our aim was to model the</div>
        <div class="jl">potential impact on</div>
        <div class="jl">depression of substituting</div>
        <div class="jl">short (30 min) durations of</div>
        <div class="jl">passive sedentary</div>
        <div class="jl">behaviour with equivalent</div>
        <div class="jl">durations of mentally</div>
        <div class="jl">active sedentary</div>
        <div class="jl">behaviour, light physical</div>
        <div class="jl">activity and moderate-to-</div>
        <div class="jl fin">vigorous activity.</div>
      </div>
    </div>
  </section>
  <div class="position-absolute top-0 end-0 d-flex">
    <button class="tb win-ctl" aria-label="最小化"><svg width="14" height="14" viewBox="0 0 14 14" style="stroke:#999"><path d="M0 6.500h13" stroke-width="1"/></svg></button>
    <button class="tb win-ctl" aria-label="最大化"><svg width="14" height="14" viewBox="0 0 14 14" style="stroke:#999"><path d="M.5.5h13v13H.5z" stroke-width="1"/></svg></button>
    <button class="tb win-ctl" aria-label="关闭"><svg width="14" height="14" viewBox="0 0 14 14" style="stroke:#999"><path d="m.5.5 13 13M13.500.500l-13 13" stroke-width="1"/></svg></button>
  </div>
  <div class="notch position-absolute"></div>
</div>
<div class="share position-absolute overflow-hidden">的屏幕共享</div>
</body>
</html>
